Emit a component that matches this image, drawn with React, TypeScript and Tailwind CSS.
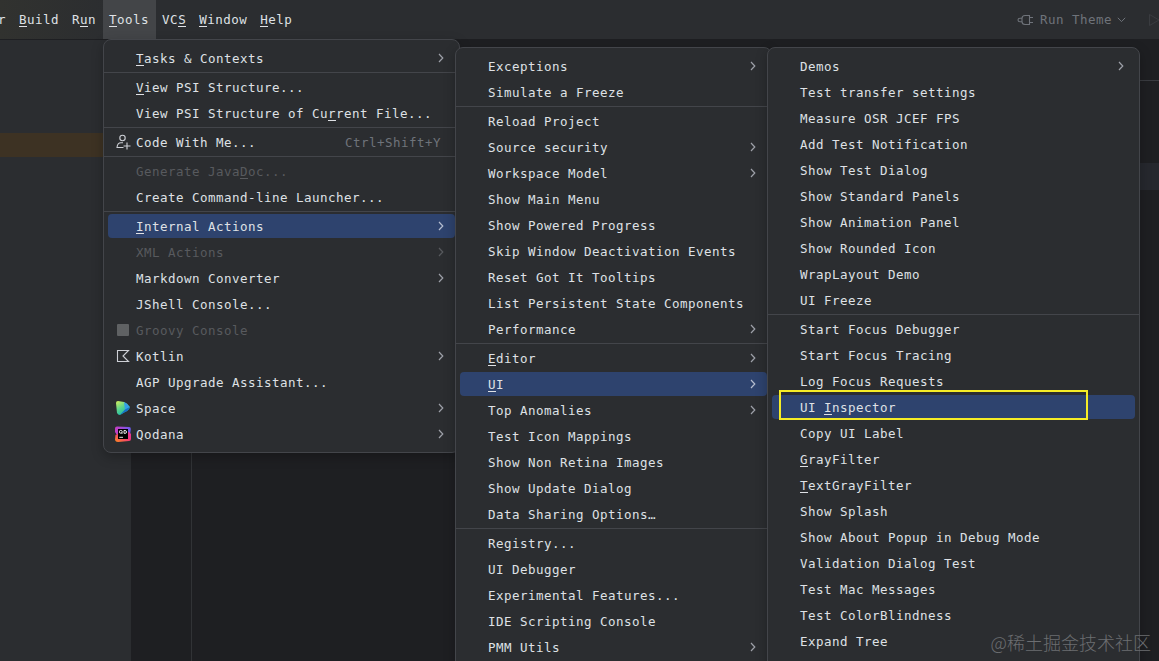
import type { ReactNode } from 'react';

type Item = { label: string; u?: number; sub?: boolean; off?: boolean; on?: boolean; shortcut?: string; icon?: ReactNode };
type Entry = Item | null;

const CodeWithMe = () => (
  <svg width="16" height="16" viewBox="0 0 16 16" fill="none" stroke="#ced0d6" strokeWidth="1.1">
    <circle cx="7.500" cy="4" r="2.700" />
    <path d="M8 8.800H6C3.600 8.800 2.300 10.500 2 13.500H8.500" />
    <path d="M12 8.500V15.500M8.500 12H15.500" />
  </svg>
);

const Groovy = () => (
  <svg width="16" height="16" viewBox="0 0 16 16">
    <rect x="2" y="2" width="12" height="12" rx="1" fill="#5f6163" />
  </svg>
);

const Kotlin = () => (
  <svg width="16" height="16" viewBox="0 0 16 16" fill="none" stroke="#ced0d6" strokeWidth="1.1">
    <path d="M2.500 2.500H13.500L8 8L13.500 13.500H2.500Z" />
  </svg>
);

const Space = () => (
  <svg width="16" height="16" viewBox="0 0 16 16">
    <defs>
      <linearGradient id="sp" x1="0" y1="0" x2="0.600" y2="1">
        <stop offset="0" stopColor="#d8ee5a" />
        <stop offset="0.500" stopColor="#5fd58b" />
        <stop offset="1" stopColor="#12b5b0" />
      </linearGradient>
    </defs>
    <path d="M1 3Q1 1 3 1L9 2Q12 3 14.800 7Q14.500 10 10 12L5 15Q3 15 2 13Z" fill="url(#sp)" />
    <path d="M9 2Q12 3 14.800 7L10 10Z" fill="#34a0e8" />
    <path d="M14.800 7Q14 10.500 10 12L5 15L10 9.500Z" fill="#1670c8" />
  </svg>
);

const Qodana = () => (
  <svg width="18" height="16" viewBox="0 0 18 16">
    <defs>
      <linearGradient id="qa" x1="0" y1="0" x2="1" y2="0">
        <stop offset="0" stopColor="#c83cc0" />
        <stop offset="1" stopColor="#6a5cf0" />
      </linearGradient>
      <linearGradient id="qb" x1="0" y1="1" x2="1" y2="0">
        <stop offset="0" stopColor="#ff8a1e" />
        <stop offset="0.600" stopColor="#f2337c" />
        <stop offset="1" stopColor="#e03c9a" />
      </linearGradient>
    </defs>
    <path d="M3 0.500L15 1Q17 1 16.800 3L16 9H3L1 6V2.500Q1 0.500 3 0.500Z" fill="url(#qa)" />
    <path d="M1.500 9L8 6H15L17 8V13Q17 15 15 15L4 16Q1.500 16 1 14Z" fill="url(#qb)" />
    <rect x="4" y="3" width="10" height="10" fill="#000" />
    <g fill="none" stroke="#fff" strokeWidth="0.900">
      <rect x="5.500" y="4.500" width="2.700" height="2.700" rx="1" />
      <path d="M7.300 6.500L8.300 7.700M10 4.500H11Q12.500 4.500 12.500 6T11 7.300H10Z" />
      <path d="M5.300 11.300H9" />
    </g>
  </svg>
);

const tools: Entry[] = [
  { label: 'Tasks & Contexts', u: 0, sub: true },
  null,
  { label: 'View PSI Structure...', u: 0 },
  { label: 'View PSI Structure of Current File...', u: 24 },
  null,
  { label: 'Code With Me...', shortcut: 'Ctrl+Shift+Y', icon: <CodeWithMe /> },
  null,
  { label: 'Generate JavaDoc...', u: 13, off: true },
  { label: 'Create Command-line Launcher...' },
  null,
  { label: 'Internal Actions', u: 0, sub: true, on: true },
  { label: 'XML Actions', sub: true, off: true },
  { label: 'Markdown Converter', sub: true },
  { label: 'JShell Console...' },
  { label: 'Groovy Console', off: true, icon: <Groovy /> },
  { label: 'Kotlin', sub: true, icon: <Kotlin /> },
  { label: 'AGP Upgrade Assistant...' },
  { label: 'Space', sub: true, icon: <Space /> },
  { label: 'Qodana', sub: true, icon: <Qodana /> },
];

const internal: Entry[] = [
  { label: 'Exceptions', sub: true },
  { label: 'Simulate a Freeze' },
  null,
  { label: 'Reload Project' },
  { label: 'Source security', sub: true },
  { label: 'Workspace Model', sub: true },
  { label: 'Show Main Menu' },
  { label: 'Show Powered Progress' },
  { label: 'Skip Window Deactivation Events' },
  { label: 'Reset Got It Tooltips' },
  { label: 'List Persistent State Components' },
  { label: 'Performance', sub: true },
  null,
  { label: 'Editor', u: 0, sub: true },
  { label: 'UI', u: 0, sub: true, on: true },
  { label: 'Top Anomalies', sub: true },
  { label: 'Test Icon Mappings' },
  { label: 'Show Non Retina Images' },
  { label: 'Show Update Dialog' },
  { label: 'Data Sharing Options…' },
  null,
  { label: 'Registry...' },
  { label: 'UI Debugger' },
  { label: 'Experimental Features...' },
  { label: 'IDE Scripting Console' },
  { label: 'PMM Utils', sub: true },
];

const ui: Entry[] = [
  { label: 'Demos', sub: true },
  { label: 'Test transfer settings' },
  { label: 'Measure OSR JCEF FPS' },
  { label: 'Add Test Notification' },
  { label: 'Show Test Dialog' },
  { label: 'Show Standard Panels' },
  { label: 'Show Animation Panel' },
  { label: 'Show Rounded Icon' },
  { label: 'WrapLayout Demo' },
  { label: 'UI Freeze' },
  null,
  { label: 'Start Focus Debugger' },
  { label: 'Start Focus Tracing' },
  { label: 'Log Focus Requests' },
  { label: 'UI Inspector', u: 3, on: true },
  { label: 'Copy UI Label' },
  { label: 'GrayFilter', u: 0 },
  { label: 'TextGrayFilter', u: 0 },
  { label: 'Show Splash' },
  { label: 'Show About Popup in Debug Mode' },
  { label: 'Validation Dialog Test' },
  { label: 'Test Mac Messages' },
  { label: 'Test ColorBlindness' },
  { label: 'Expand Tree' },
];

function Label({ text, u }: { text: string; u?: number }) {
  if (u === undefined) return <span className="whitespace-pre">{text}</span>;
  return (
    <span className="whitespace-pre">
      {text.slice(0, u)}
      <span className="inline-block h-[14px] border-b border-current leading-[14px]">{text[u]}</span>
      {text.slice(u + 1)}
    </span>
  );
}

function Chevron() {
  return (
    <svg className="mr-[11px]" width="6" height="10" viewBox="0 0 6 10" fill="none" stroke="currentColor" strokeWidth="1.2">
      <path d="M1 1L4.800 5L1 9" />
    </svg>
  );
}

function Menu({ items, className }: { items: Entry[]; className: string }) {
  return (
    <div className={`absolute flex flex-col rounded-lg border border-[#43454a] bg-[#2b2d30] py-[5px] shadow-[0_4px_12px_rgba(0,0,0,0.25)] ${className}`}>
      {items.map((it, i) =>
        it === null ? (
          <div key={i} className="h-[3px] shrink-0 py-px">
            <div className="h-px bg-[#43454a]" />
          </div>
        ) : (
          <div key={i} className="flex h-[26px] shrink-0 px-1 py-px">
            <div
              className={`flex grow items-center rounded ${it.on ? 'bg-[#2e436e]' : ''} ${it.off ? 'text-[#585a5e]' : 'text-[#dfe1e5]'}`}
            >
              <div className="flex w-7 shrink-0 items-center justify-center pl-[2px]">{it.icon}</div>
              <div className="pt-[2px]">
                <Label text={it.label} u={it.u} />
              </div>
              <div className={`ml-auto flex items-center ${it.off ? '' : it.on ? 'text-[#b5bdcf]' : 'text-[#9da0a8]'}`}>
                {it.shortcut && <span className="mr-[14px] pt-[2px] text-[#6f737a]">{it.shortcut}</span>}
                {it.sub && <Chevron />}
              </div>
            </div>
          </div>
        ),
      )}
    </div>
  );
}

const bar = [
  { label: 'Build', u: 0 },
  { label: 'Run', u: 1 },
  { label: 'Tools', u: 0, on: true },
  { label: 'VCS', u: 2 },
  { label: 'Window', u: 0 },
  { label: 'Help', u: 0 },
];

export default function App() {
  return (
    <div className="relative flex h-[661px] w-[1159px] flex-col overflow-hidden bg-[#1e1f22] font-['DejaVu_Sans_Mono',monospace] text-[12.5px] leading-[18px] tracking-[0.475px] text-[#dfe1e5]">
      <header className="flex h-10 shrink-0 border-b border-[#1e1f22] bg-[#2b2d30]">
        <div className="flex grow bg-linear-to-r from-[#31322f] to-[#2b2d30] to-10%">
          <div className="flex w-[13px] items-center">
            <span className="-ml-[2px]">r</span>
          </div>
          {bar.map((b) => (
            <div key={b.label} className={`flex items-center pr-[7px] pl-[6px] ${b.on ? 'bg-[#434548]' : ''}`}>
              <Label text={b.label} u={b.u} />
            </div>
          ))}
          <div className="ml-auto flex items-center text-[#6f737a]">
            <svg className="mr-[6px]" width="17" height="12" viewBox="0 0 17 12" fill="none" stroke="currentColor" strokeWidth="1.1">
              <path d="M5 4.200H3Q1 4.200 1 6T3 7.800H5" />
              <path d="M12.500 1.500H8Q5 1.500 5 4.500V7.500Q5 10.500 8 10.500H12.500ZM12.500 3.500H16M12.500 8.500H16" />
            </svg>
            <span className="whitespace-pre">Run Theme</span>
            <svg className="ml-[5px]" width="9" height="6" viewBox="0 0 9 6" fill="none" stroke="currentColor">
              <path d="M0.800 0.800L4.500 4.600L8.200 0.800" />
            </svg>
            <svg className="ml-[22px]" width="11" height="14" viewBox="0 0 11 14" fill="none" stroke="#3a3c40">
              <path d="M1.500 1.500V12.500L11 7Z" />
            </svg>
          </div>
        </div>
      </header>
      <main className="flex grow">
        <aside className="w-[131px] bg-[#2b2d30] pt-[93px]">
          <div className="h-[24px] bg-[#3d3223]" />
        </aside>
        <div className="w-[61px] border-r border-[#313336]" />
        <section className="flex grow flex-col">
          <div className="h-[41px] border-b border-[#393b40]" />
          <div className="mt-[82px] h-[27px] bg-[#26282e]" />
        </section>
      </main>

      <Menu items={tools} className="top-[39px] left-[103px] w-[357px]" />
      <Menu items={internal} className="top-[47px] left-[455px] h-[640px] w-[317px]" />
      <Menu items={ui} className="top-[47px] left-[767px] h-[640px] w-[373px]" />
      <div className="absolute top-[390px] left-[779px] h-[30px] w-[309px] border-2 border-[#f5ec26]" />
      <div className="absolute right-[8px] bottom-[7px] font-['Noto_Sans_CJK_SC',sans-serif] text-[18px] leading-6 font-light tracking-normal whitespace-nowrap text-[#6c6e71]">
        @稀土掘金技术社区
      </div>
    </div>
  );
}
